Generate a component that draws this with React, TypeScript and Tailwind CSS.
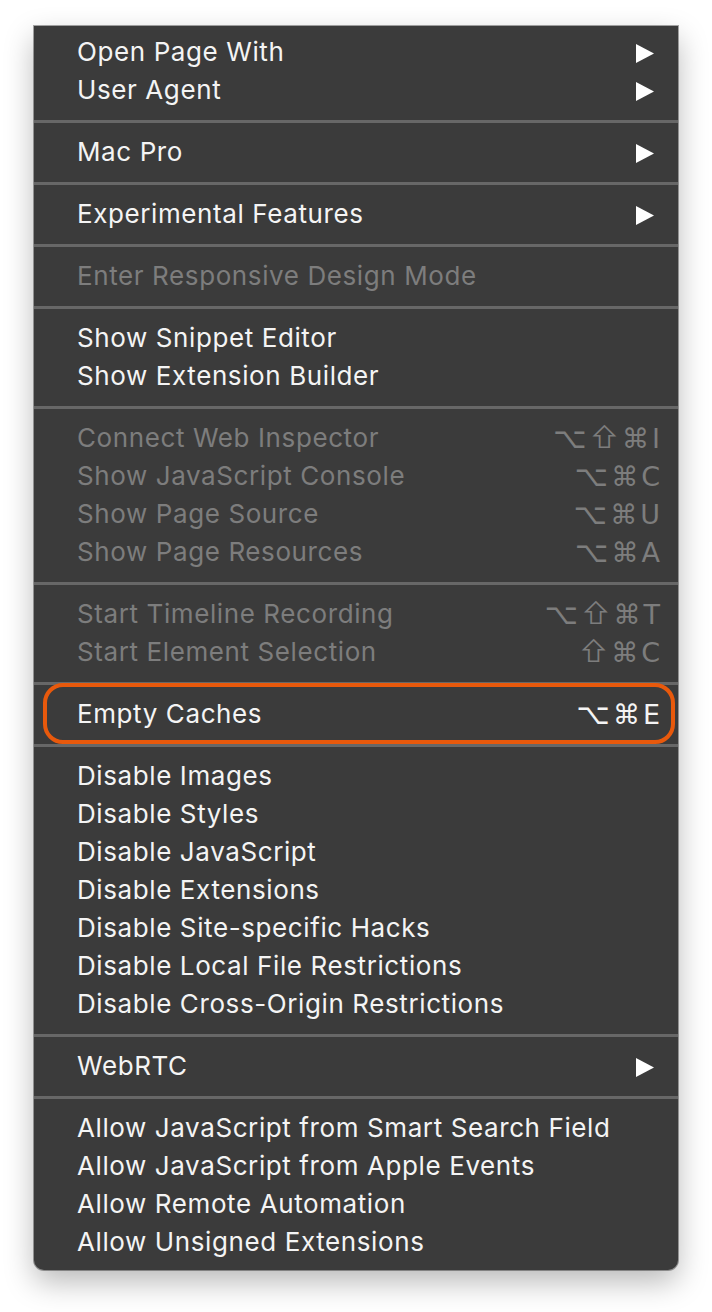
import React from "react";

type Item = {
  label: string;
  disabled?: boolean;
  submenu?: boolean;
  shortcut?: string;
  highlight?: boolean;
};

const groups: Item[][] = [
  [
    { label: "Open Page With", submenu: true },
    { label: "User Agent", submenu: true },
  ],
  [{ label: "Mac Pro", submenu: true }],
  [{ label: "Experimental Features", submenu: true }],
  [{ label: "Enter Responsive Design Mode", disabled: true }],
  [{ label: "Show Snippet Editor" }, { label: "Show Extension Builder" }],
  [
    { label: "Connect Web Inspector", disabled: true, shortcut: "⌥⇧⌘I" },
    { label: "Show JavaScript Console", disabled: true, shortcut: "⌥⌘C" },
    { label: "Show Page Source", disabled: true, shortcut: "⌥⌘U" },
    { label: "Show Page Resources", disabled: true, shortcut: "⌥⌘A" },
  ],
  [
    { label: "Start Timeline Recording", disabled: true, shortcut: "⌥⇧⌘T" },
    { label: "Start Element Selection", disabled: true, shortcut: "⇧⌘C" },
  ],
  [{ label: "Empty Caches", shortcut: "⌥⌘E", highlight: true }],
  [
    { label: "Disable Images" },
    { label: "Disable Styles" },
    { label: "Disable JavaScript" },
    { label: "Disable Extensions" },
    { label: "Disable Site-specific Hacks" },
    { label: "Disable Local File Restrictions" },
    { label: "Disable Cross-Origin Restrictions" },
  ],
  [{ label: "WebRTC", submenu: true }],
  [
    { label: "Allow JavaScript from Smart Search Field" },
    { label: "Allow JavaScript from Apple Events" },
    { label: "Allow Remote Automation" },
    { label: "Allow Unsigned Extensions" },
  ],
];

const Arrow = () => (
  <svg width="18" height="19" viewBox="0 0 18 19" className="mr-[6px]">
    <polygon points="0,0 18,9.5 0,19" fill="#ffffff" />
  </svg>
);

const Row = ({ item }: { item: Item }) => (
  <div
    className={`relative flex h-[38px] items-center justify-between pl-[43px] pr-[18px] text-[26px] leading-none ${
      item.disabled ? "text-[#7d7d7d]" : "text-[#f4f4f4]"
    }`}
  >
    <span className="-mt-[2px] tracking-[0.6px]">{item.label}</span>
    {item.submenu && <Arrow />}
    {item.shortcut && (
      <span className="-mt-[2px] flex items-center gap-[3px] [font-family:'DejaVu_Sans',Inter,sans-serif] text-[27px]">
        {item.shortcut.split("").map((c, i) => (
          <span
            key={i}
            className={
              c === "⇧" ? "text-[30px] font-light" : c === "⌥" ? "text-[29px]" : ""
            }
          >
            {c}
          </span>
        ))}
      </span>
    )}
    {item.highlight && (
      <div className="pointer-events-none absolute -top-[13px] -bottom-[10px] left-[9px] right-[3px] rounded-[20px] border-[4px] border-[#e8590c]" />
    )}
  </div>
);

const Separator = () => (
  <div className="flex h-[24px] flex-col pt-[10px]">
    <div className="h-[3px] bg-[#676767]" />
  </div>
);

export default function App() {
  return (
    <div className="min-h-[1312px] bg-white pl-[34px] pt-[26px] [font-family:Inter,'DejaVu_Sans',sans-serif]">
      <div className="w-[644px] rounded-b-[10px] bg-[#3b3b3b] py-[8px] shadow-[0_12px_30px_rgba(0,0,0,0.28),0_0_0_1px_rgba(110,110,110,0.6)]">
        {groups.map((g, gi) => (
          <React.Fragment key={gi}>
            {gi > 0 && <Separator />}
            {g.map((item) => (
              <Row key={item.label} item={item} />
            ))}
          </React.Fragment>
        ))}
      </div>
    </div>
  );
}
